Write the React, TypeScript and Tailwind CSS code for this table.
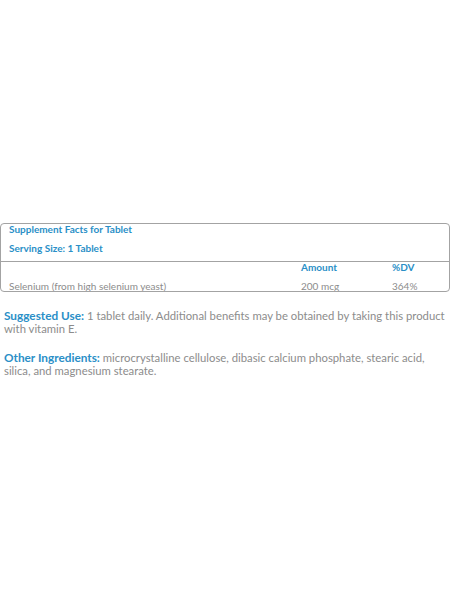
export default function App() {
  return (
    <div className="min-h-[600px] bg-white pt-[223px] font-['Lato',sans-serif]">
      <div className="h-[69px] overflow-hidden rounded-[4px] border border-[#a3a3a3] text-[10px]">
        <div className="border-b border-[#a3a3a3] px-[8px] pb-[5px]">
          <p className="h-[19px] leading-[10px] font-bold text-[#2a8fc7]">Supplement Facts for Tablet</p>
          <p className="h-[13px] leading-[10px] font-bold text-[#2a8fc7]">Serving Size: 1 Tablet</p>
        </div>
        <div className="grid grid-cols-[292px_91px_1fr] px-[8px]">
          <span />
          <span className="font-bold text-[#2a8fc7] leading-[10px]">Amount</span>
          <span className="font-bold text-[#2a8fc7] leading-[10px]">%DV</span>
          <span className="pt-[8px] leading-[12px] text-[#8c8c8c]">Selenium (from high selenium yeast)</span>
          <span className="pt-[8px] leading-[12px] text-[#8c8c8c]">200 mcg</span>
          <span className="pt-[8px] leading-[12px] text-[#8c8c8c]">364%</span>
        </div>
      </div>
      <div className="pl-[4px] pt-[17px] text-[11.3px] leading-[13px] text-[#8c8c8c]">
        <p>
          <span className="text-[11.8px] font-bold text-[#2a8fc7]">Suggested Use:</span> 1 tablet daily. Additional benefits may be obtained by taking this product with vitamin E.
        </p>
        <p className="mt-[16px]">
          <span className="text-[11.8px] font-bold text-[#2a8fc7]">Other Ingredients:</span> microcrystalline cellulose, dibasic calcium phosphate, stearic acid, silica, and magnesium stearate.
        </p>
      </div>
    </div>
  );
}
